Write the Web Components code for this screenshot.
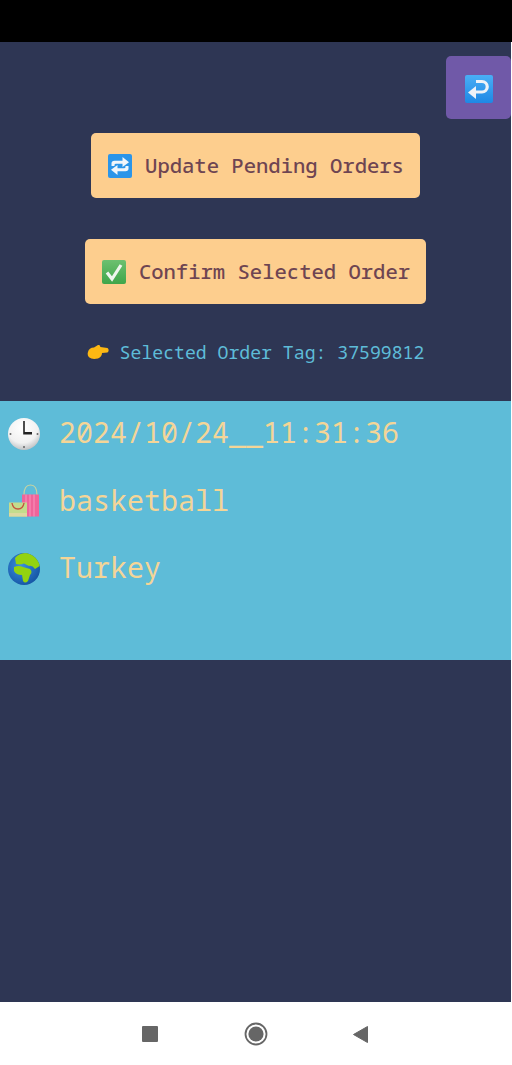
<!DOCTYPE html>
<html lang="en">
<head>
<meta charset="UTF-8">
<title>Orders</title>
<style>
  html, body { margin: 0; padding: 0; background: #fff; }
  body { width: 512px; height: 1065px; overflow: hidden; }
</style>
</head>
<body>

<template id="phone-screen-template">
  <style>
    :host { display: flex; flex-direction: column; width: 512px; height: 1065px; font-family: "Noto Sans Mono", "DejaVu Sans Mono", monospace; }
    .status { height: 42px; background: #000; flex: none; }
    .main { flex: 1; background: #2e3654; margin-right: 1px; display: flex; flex-direction: column; }
    .nav { height: 63px; flex: none; background: #fff; }
  </style>
  <div class="status"></div>
  <div class="main"><slot></slot></div>
  <div class="nav"><slot name="nav"></slot></div>
</template>

<template id="back-button-template">
  <style>
    :host { display: flex; justify-content: flex-end; margin-top: 14px; height: 63px; flex: none; }
    .box { width: 65px; height: 63px; padding-top: 3px; box-sizing: border-box; background: #7059a8; border-radius: 5px; display: flex; align-items: center; justify-content: center; }
  </style>
  <div class="box"><slot></slot></div>
</template>

<template id="action-button-template">
  <style>
    :host { display: flex; justify-content: center; flex: none; }
    .btn { display: flex; align-items: center; height: 65px; padding: 0 16px 0 17px; gap: 13px; box-sizing: border-box; background: #fdce8e; color: #6e4552; border-radius: 5px; font-size: 20.55px; font-weight: 500; white-space: nowrap; }
    span { padding-bottom: 2px; }
  </style>
  <div class="btn"><slot name="icon"></slot><span><slot></slot></span></div>
</template>

<template id="selected-tag-template">
  <style>
    :host { display: flex; justify-content: center; align-items: center; gap: 11px; height: 28px; flex: none; color: #5ebcd8; font-size: 18.15px; white-space: nowrap; }
  </style>
  <slot name="icon"></slot><span><slot></slot></span>
</template>

<template id="order-panel-template">
  <style>
    :host { display: block; background: #5ebcd8; height: 259px; box-sizing: border-box; flex: none; }
  </style>
  <slot></slot>
</template>

<template id="order-row-template">
  <style>
    :host { display: flex; align-items: center; gap: 18px; height: 65.5px; padding: 0 0 2px 7px; color: #f4d597; font-size: 28.33px; white-space: nowrap; }
    span { padding-bottom: 3px; }
  </style>
  <slot name="icon"></slot><span><slot></slot></span>
</template>

<template id="nav-bar-template">
  <style>
    :host { display: flex; height: 63px; }
    svg { display: block; }
  </style>
  <svg width="512" height="63" viewBox="0 0 512 63">
    <rect x="142" y="24" width="16" height="16" rx="1" fill="#666"/>
    <circle cx="256" cy="32" r="10.5" fill="none" stroke="#666" stroke-width="1.8"/>
    <circle cx="256" cy="32" r="7.6" fill="#666"/>
    <path d="M353.500 32.500 L367.500 24.500 V40.500 Z" fill="#666" stroke="#666" stroke-width="1" stroke-linejoin="round"/>
  </svg>
</template>

<phone-screen>
  <back-button>
    <svg width="28" height="28" viewBox="0 0 28 28"><defs><linearGradient id="bg1" x1="0" y1="0" x2="0" y2="1"><stop offset="0" stop-color="#4aaef5"/><stop offset="1" stop-color="#1e88e5"/></linearGradient></defs><rect width="28" height="28" rx="2" fill="url(#bg1)"/><path d="M11 6.500 H17 a5.250 5.250 0 0 1 0 10.500 H10" fill="none" stroke="#eef2f7" stroke-width="3.200"/><path d="M3 17.500 L11 11 V24 Z" fill="#eef2f7"/></svg>
  </back-button>

  <action-button style="margin-top:14px">
    <svg slot="icon" width="24" height="24" viewBox="0 0 24 24"><rect width="24" height="24" rx="2" fill="#2b95e9"/><path d="M3.500 12 V9.500 Q3.500 6.800 6.500 6.800 H14.500 V3 L21 8.300 14.500 13 V9.800 H8 Q6.500 9.800 6.500 11 V12 Z" fill="#f2f6fa"/><path d="M20.500 12 V14.500 Q20.500 17.200 17.500 17.200 H9.500 V21 L3 15.700 9.500 11 V14.200 H16 Q17.500 14.200 17.500 13 V12 Z" fill="#f2f6fa"/></svg>
    Update Pending Orders
  </action-button>

  <action-button style="margin-top:41px">
    <svg slot="icon" width="24" height="24" viewBox="0 0 24 24"><defs><linearGradient id="bg2" x1="0" y1="0" x2="0" y2="1"><stop offset="0" stop-color="#6cc070"/><stop offset="1" stop-color="#3fa64a"/></linearGradient></defs><rect width="24" height="24" rx="2" fill="url(#bg2)"/><path d="M5 12.500 L10 19 L19 5" fill="none" stroke="#eef6ee" stroke-width="3.200"/></svg>
    Confirm Selected Order
  </action-button>

  <selected-tag style="margin-top:34px">
    <svg slot="icon" width="22" height="16" viewBox="0 0 22 16"><path d="M1 8 Q2 3.500 7 3.500 L11 1 Q13.500 .5 13.300 3 L20.500 4 Q22.800 6 20.500 8.500 L15 9 Q15 12.500 11 14.500 Q5 15.800 2 13.300 Q0 11 1 8 Z" fill="#fdb813"/></svg>
    Selected Order Tag: 37599812
  </selected-tag>

  <order-panel style="margin-top:35px">
    <order-row>
      <svg slot="icon" width="34" height="34" viewBox="0 0 34 34"><defs><radialGradient id="cl" cx=".45" cy=".3" r=".8"><stop offset="0" stop-color="#fff"/><stop offset=".6" stop-color="#f1f1f1"/><stop offset="1" stop-color="#a9adb1"/></radialGradient></defs><circle cx="17" cy="17" r="16" fill="url(#cl)"/><path d="M16.200 4 H17.800 V15 H25 V17.500 H16.200 Z" fill="#222"/><circle cx="3.500" cy="17" r="1" fill="#666"/><circle cx="30.500" cy="17" r="1" fill="#666"/><circle cx="17" cy="30" r="1" fill="#666"/></svg>
      2024/10/24__11:31:36
    </order-row>
    <order-row>
      <svg slot="icon" width="34" height="34" viewBox="0 0 34 34"><path d="M17 11 Q17 1 23.500 1 Q30 1 30 11" fill="none" stroke="#c9d3a0" stroke-width="1.200"/><rect x="15" y="10.500" width="17" height="22" fill="#f0649a"/><path d="M19 10.500 V32.500 M23 10.500 V32.500 M27 10.500 V32.500" stroke="#f78eb8" stroke-width="1.200"/><rect x="2" y="18.500" width="18" height="14" fill="#c3dc8c"/><rect x="2" y="29" width="18" height="3.500" fill="#dcd9a0"/><path d="M5 19 Q6 25 11 25 Q16 25 17 19" fill="none" stroke="#c4553f" stroke-width="1.400"/></svg>
      basketball
    </order-row>
    <order-row>
      <svg slot="icon" width="34" height="34" viewBox="0 0 34 34"><defs><clipPath id="gc"><circle cx="17" cy="17" r="16"/></clipPath><radialGradient id="oc" cx=".4" cy=".4" r=".7"><stop offset="0" stop-color="#3b8fe0"/><stop offset="1" stop-color="#12509f"/></radialGradient></defs><circle cx="17" cy="17" r="16" fill="url(#oc)"/><g clip-path="url(#gc)" fill="#93d30f"><path d="M8 6 Q13 0 24 1 Q33 5 34 13 L28 17 Q25 13 22 14 L17 11.500 Q13 13 9 12 Z"/><path d="M7 15 Q12 13 16 15 L23 17 Q26 20 23 23 L21 29 Q18 32 16 29 L15 23 Q9 23 7 19 Z"/></g></svg>
      Turkey
    </order-row>
  </order-panel>

  <nav-bar slot="nav"></nav-bar>
</phone-screen>

<script>
  // Same little class for every element, just clones its template
  function define(tag) {
    customElements.define(tag, class extends HTMLElement {
      constructor() {
        super();
        this.attachShadow({ mode: 'open' });
        this.shadowRoot.appendChild(document.getElementById(tag + '-template').content.cloneNode(true));
      }
    });
  }
  ['phone-screen', 'back-button', 'action-button', 'selected-tag', 'order-panel', 'order-row', 'nav-bar'].forEach(define);
</script>
</body>
</html>
